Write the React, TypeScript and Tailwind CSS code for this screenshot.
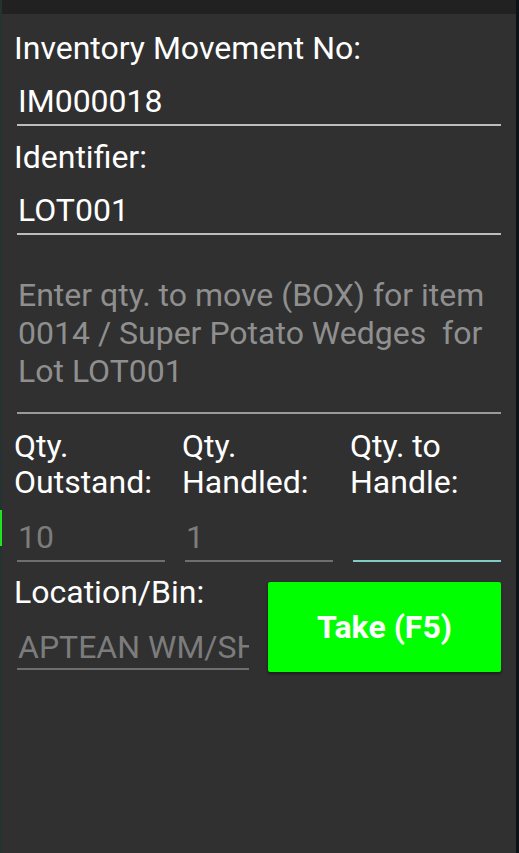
export default function App() {
  const label = "text-[32px] leading-[37px] text-white";
  const value = "text-[32px] leading-[37px]";

  const qtys = [
    { l1: "Qty.", l2: "Outstand:", v: "10", active: false },
    { l1: "Qty.", l2: "Handled:", v: "1", active: false },
    { l1: "Qty. to", l2: "Handle:", v: "", active: true },
  ];

  return (
    <div
      className="flex h-[853px] w-[519px] overflow-hidden bg-[#303030]"
      style={{ fontFamily: "Roboto, 'Noto Sans', sans-serif" }}
    >
      {/* left window edge */}
      <div className="flex w-[2px] flex-col bg-[#24332f]">
        <div className="h-[510px]" />
        <div className="h-[36px] bg-[#22e022]" />
      </div>

      <div className="flex flex-1 flex-col">
        {/* status bar */}
        <div className="h-[14px] bg-[#212121]" />

        <div className="flex flex-col">
          <div className={`${label} ml-[12px] mt-[16px]`}>Inventory Movement No:</div>
          <div className="mx-[15px] mt-[16px] border-b-2 border-[#bdbdbd] pb-[4px]">
            <div className={`${value} pl-[1px] text-white`}>IM000018</div>
          </div>

          <div className={`${label} ml-[12px] mt-[13px]`}>Identifier:</div>
          <div className="mx-[15px] mt-[16px] border-b-2 border-[#bdbdbd] pb-[4px]">
            <div className={`${value} pl-[1px] text-white`}>LOT001</div>
          </div>

          {/* hint */}
          <div className="mx-[15px] mt-[41px] border-b-2 border-[#9a9a9a] pb-[22px]">
            <div className="pl-[1px] text-[32px] leading-[38px] text-[#8f8f8f]">
              Enter qty. to move (BOX) for item 0014 / Super Potato Wedges&nbsp; for Lot LOT001
            </div>
          </div>

          {/* quantities */}
          <div className="mx-[15px] mt-[14px] grid grid-cols-3 gap-x-[20px]">
            {qtys.map((c, i) => (
              <div key={i} className="flex flex-col">
                <div className="ml-[-3px] text-[32px] leading-[36px] text-white">
                  {c.l1}
                  <br />
                  {c.l2}
                </div>
                <div
                  className={`mt-[19px] border-b-2 pb-[4px] ${
                    c.active ? "border-[#80cbc4]" : "border-[#6e6e6e]"
                  }`}
                >
                  <div className={`${value} h-[37px] pl-[1px] text-[#7c7c7c]`}>{c.v}</div>
                </div>
              </div>
            ))}
          </div>

          {/* location + button */}
          <div className="mt-[12px] flex items-start">
            <div className="flex w-[247px] flex-col">
              <div className={`${label} ml-[12px]`}>Location/Bin:</div>
              <div className="ml-[15px] mt-[18px] overflow-hidden border-b-2 border-[#6e6e6e] pb-[2px]">
                <div className={`${value} whitespace-nowrap pl-[1px] text-[#7c7c7c]`}>APTEAN WM/SHIP</div>
              </div>
            </div>
            <button className="ml-[19px] mt-[8px] flex h-[90px] w-[233px] items-center justify-center rounded-[2px] bg-[#00ff00] text-[32px] font-bold text-white shadow-[0_2px_3px_rgba(0,0,0,0.45)]">
              Take (F5)
            </button>
          </div>
        </div>
      </div>

      {/* right window edge */}
      <div className="w-[3px] bg-[#0b1218]" />
    </div>
  );
}
